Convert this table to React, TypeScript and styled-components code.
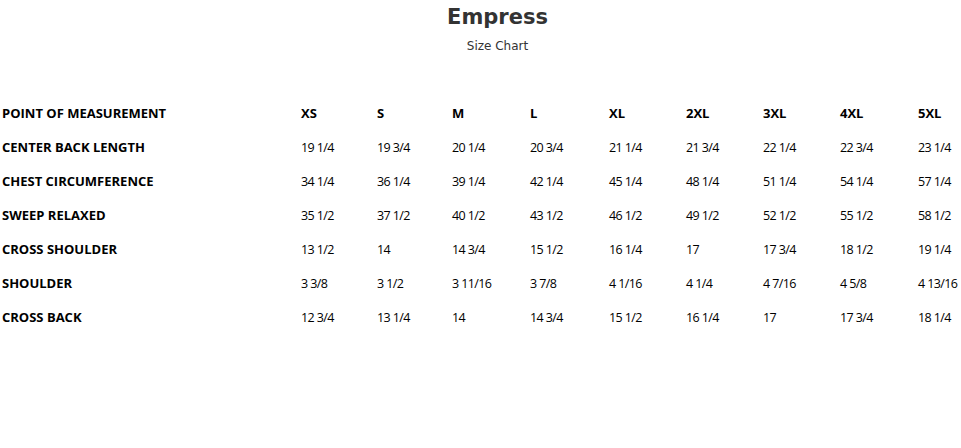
import React from "react";
import styled, { createGlobalStyle } from "styled-components";

const Global = createGlobalStyle`
  html, body { margin: 0; padding: 0; background: #fff; overflow-x: hidden; }
  body { font-family: "Open Sans", "DejaVu Sans", sans-serif; }
`;

const Page = styled.div`
  width: 995px;
  display: flex;
  flex-direction: column;
  align-items: center;
`;

const Title = styled.h1`
  margin: 0;
  font-family: "DejaVu Sans", sans-serif;
  font-size: 21px;
  line-height: 34px;
  font-weight: 700;
  color: #333;
`;

const Subtitle = styled.div`
  font-family: "DejaVu Sans", sans-serif;
  font-size: 12px;
  line-height: 22px;
  color: #333;
  margin: 1px 0 39px;
`;

const Table = styled.table`
  width: 995px;
  border-collapse: collapse;
  table-layout: fixed;
  color: #000;
`;

const Col = styled.col<{ $w: number }>`
  width: ${(p) => p.$w}px;
`;

const Row = styled.tr`
  height: 34px;
`;

const Cell = styled.td<{ $bold?: boolean }>`
  padding: 0 0 0 2px;
  font-size: ${(p) => (p.$bold ? "13px" : "12.5px")};
  font-weight: ${(p) => (p.$bold ? 700 : 400)};
  letter-spacing: ${(p) => (p.$bold ? "0" : "-0.6px")};
  white-space: nowrap;
  vertical-align: middle;
`;

const sizes = ["XS", "S", "M", "L", "XL", "2XL", "3XL", "4XL", "5XL"];
const rows: [string, string[]][] = [
  ["CENTER BACK LENGTH", ["19 1/4", "19 3/4", "20 1/4", "20 3/4", "21 1/4", "21 3/4", "22 1/4", "22 3/4", "23 1/4"]],
  ["CHEST CIRCUMFERENCE", ["34 1/4", "36 1/4", "39 1/4", "42 1/4", "45 1/4", "48 1/4", "51 1/4", "54 1/4", "57 1/4"]],
  ["SWEEP RELAXED", ["35 1/2", "37 1/2", "40 1/2", "43 1/2", "46 1/2", "49 1/2", "52 1/2", "55 1/2", "58 1/2"]],
  ["CROSS SHOULDER", ["13 1/2", "14", "14 3/4", "15 1/2", "16 1/4", "17", "17 3/4", "18 1/2", "19 1/4"]],
  ["SHOULDER", ["3 3/8", "3 1/2", "3 11/16", "3 7/8", "4 1/16", "4 1/4", "4 7/16", "4 5/8", "4 13/16"]],
  ["CROSS BACK", ["12 3/4", "13 1/4", "14", "14 3/4", "15 1/2", "16 1/4", "17", "17 3/4", "18 1/4"]],
];
const widths = [299, 76, 75, 78, 79, 77, 77, 77, 78, 79];

export default function App() {
  return (
    <>
      <Global />
      <Page>
        <Title>Empress</Title>
        <Subtitle>Size Chart</Subtitle>
        <Table>
          <colgroup>
            {widths.map((w, i) => (
              <Col key={i} $w={w} />
            ))}
          </colgroup>
          <tbody>
            <Row>
              <Cell $bold>POINT OF MEASUREMENT</Cell>
              {sizes.map((s) => (
                <Cell $bold key={s}>{s}</Cell>
              ))}
            </Row>
            {rows.map(([label, vals]) => (
              <Row key={label}>
                <Cell $bold>{label}</Cell>
                {vals.map((v, i) => (
                  <Cell key={i}>{v}</Cell>
                ))}
              </Row>
            ))}
          </tbody>
        </Table>
      </Page>
    </>
  );
}
